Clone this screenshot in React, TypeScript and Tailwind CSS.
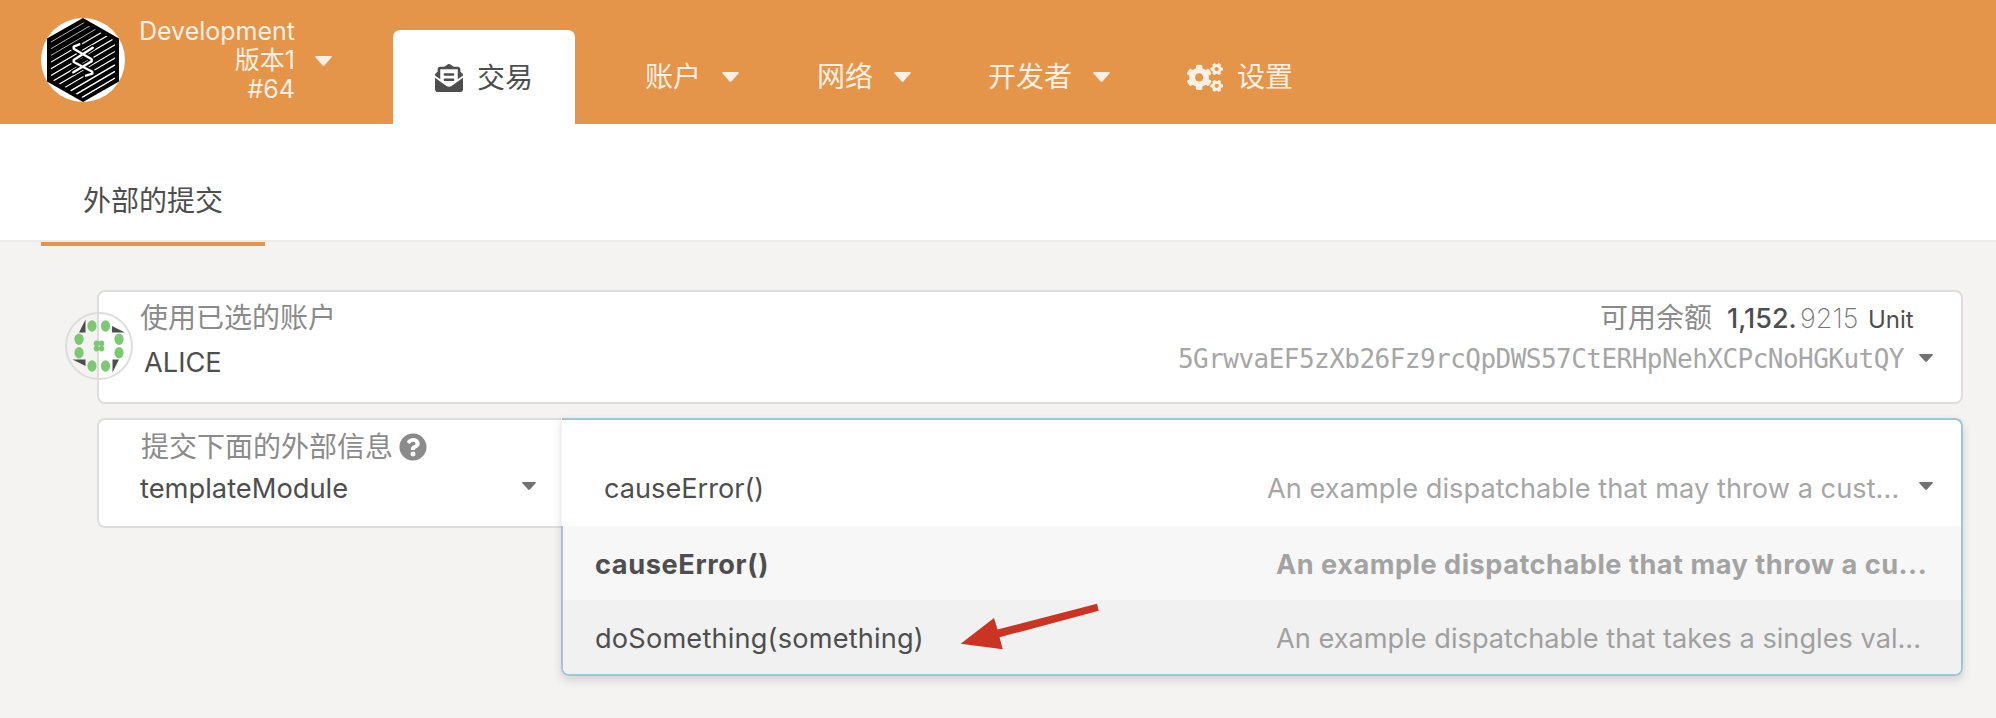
import { FaCogs, FaEnvelopeOpenText, FaQuestionCircle } from "react-icons/fa";

function Caret({ className }: { className: string }) {
  return (
    <svg viewBox="0 0 16 10" preserveAspectRatio="none" className={className} fill="currentColor">
      <path d="M1 0H15Q16.4 0.4 15.5 1.6L9 9.3Q8 10.4 7 9.3L0.5 1.6Q-0.4 0.4 1 0Z" />
    </svg>
  );
}

const stripes = [-3, -2, -1, 0, 1, 2, 3, 4, 5, 6, 7, 8, 9, 10, 11, 12];
const helix =
  "M38.3 26.3L32.7 28.7V30.7L50.7 41.3V43.3L32.3 54.3M51.7 29.7L32.7 42V44L51.3 53.7V55.7L45 57.7";

function Logo() {
  return (
    <svg viewBox="0 0 84 84" className="h-[84px] w-[84px] shrink-0">
      <defs>
        <clipPath id="hex-inner">
          <path d="M42 4L74 23V61L42 80L10 61V23Z" />
        </clipPath>
      </defs>
      <circle cx="42" cy="42" r="42" fill="#fff" />
      <path d="M42 0L78 20.5V63.5L42 84L6 63.5V20.5Z" fill="#000" />
      <g clipPath="url(#hex-inner)" stroke="#fff">
        {stripes.map((i) => (
          <line key={i} x1="10" x2="74" y1={24 + i * 6.7} y2={-13.5 + i * 6.7} strokeWidth={i < 3 ? 0.7 : i > 8 ? 1.5 : 1.2} />
        ))}
      </g>
      <g fill="none" strokeLinecap="round" strokeLinejoin="round">
        <path d={helix} stroke="#000" strokeWidth="5.5" />
        <path d={helix} stroke="#fff" strokeWidth="2.4" />
      </g>
    </svg>
  );
}

const dots = [
  [26, 14], [39.5, 14], [13, 27.3], [13, 40.7], [53, 27.3], [53, 40.7], [26, 54], [39.5, 54],
];
const centreDots = [
  [30.5, 31.4], [35.5, 31.4], [30.5, 36.6], [35.5, 36.6],
];

function Identicon() {
  return (
    <svg viewBox="0 0 68 68" className="absolute top-[20px] left-[-34px] h-[68px] w-[68px]">
      <circle cx="34" cy="34" r="33" fill="none" stroke="#ddd" strokeWidth="2" />
      <path d="M20.5 7.5V20.5H14ZM47 14L60 20.5H47ZM7.5 47.5H20.5V54ZM47.5 47.5H54L47.5 60.5Z" fill="#4e4e4e" />
      <g fill="#7dc872" transform="translate(1 0)">
        {dots.map(([x, y]) => (
          <ellipse key={`${x}-${y}`} cx={x} cy={y} rx="4.6" ry="5.7" />
        ))}
        {centreDots.map(([x, y]) => (
          <circle key={`${x}-${y}`} cx={x} cy={y} r="2.8" />
        ))}
      </g>
    </svg>
  );
}

function NavItem({ label, className }: { label: string; className: string }) {
  return (
    <div className={`flex items-center ${className}`}>
      <span>{label}</span>
      <Caret className="ml-[21px] h-[10px] w-[17px]" />
    </div>
  );
}

export default function App() {
  return (
    <div className="h-[718px] w-[1996px] overflow-hidden bg-[#f4f3f1] font-['Inter','Noto_Sans_CJK_SC',sans-serif] text-[28px] leading-[36px] text-[#4e4e4e]">
      <header className="flex h-[124px] bg-[#e49549] pl-[41px] text-[#fcefe3]">
        <div className="flex w-[352px] items-start pt-[18px]">
          <Logo />
          <div className="-mt-px w-[170px] text-right text-[25px] leading-[29px]">
            <div>Development</div>
            <div>版本1</div>
            <div>#64</div>
          </div>
          <Caret className="mt-[38px] ml-[20px] h-[10px] w-[17px]" />
        </div>
        <div className="mt-[30px] flex w-[182px] items-center rounded-t-[7px] bg-white pt-[2px] pl-[42px] text-[#4e4e4e]">
          <FaEnvelopeOpenText className="h-[28px] w-[28px]" />
          <span className="ml-[14px]">交易</span>
        </div>
        <nav className="mt-[30px] flex items-center">
          <NavItem label="账户" className="ml-[70px] w-[172px]" />
          <NavItem label="网络" className="w-[171px]" />
          <NavItem label="开发者" className="w-[199px]" />
          <FaCogs className="h-[29px] w-[36px]" />
          <span className="ml-[14px]">设置</span>
        </nav>
      </header>

      <div className="h-[118px] border-b-2 border-[#ebebea] bg-white pl-[41px]">
        <div className="flex h-[122px] w-[224px] items-center justify-center border-b-4 border-[#e49549] pt-[36px]">外部的提交</div>
      </div>

      <main className="pt-[48px] pl-[97px]">
        <section className="relative flex h-[114px] w-[1866px] justify-between rounded-[8px] border-2 border-[#ddd] bg-white">
          <Identicon />
          <div className="pt-[8px] pl-[41px]">
            <div className="text-[#8b8b8b]">使用已选的账户</div>
            <div className="mt-[9px] ml-[4px] text-[27.2px]">ALICE</div>
          </div>
          <div className="flex pt-[8px]">
            <div className="w-[726px]">
              <div className="flex items-baseline pl-[422px] whitespace-nowrap">
                <span className="w-[127px] shrink-0 text-[#8b8b8b]">可用余额</span>
                <span className="w-[73px] shrink-0 text-[27px] font-medium">1,152.</span>
                <span className="w-[68px] shrink-0 text-[27px] font-extralight text-[#777]">9215</span>
                <span className="shrink-0 text-[24px]">Unit</span>
              </div>
              <div className="mt-[3px] font-['DejaVu_Sans_Mono',monospace] text-[26px] tracking-[-0.53px] whitespace-nowrap text-[#a6a6a6]">5GrwvaEF5zXb26Fz9rcQpDWS57CtERHpNehXCPcNoHGKutQY</div>
            </div>
            <Caret className="mt-[54px] mr-[28px] ml-[15px] h-[8px] w-[14px] text-[#727272]" />
          </div>
        </section>

        <section className="mt-[14px] flex w-[1866px] items-start">
          <div className="flex h-[110px] w-[464px] rounded-l-[8px] border-2 border-r-0 border-[#ddd] bg-white">
            <div className="w-[383px] pt-[9px] pl-[42px]">
              <div className="flex items-center text-[#8b8b8b]">
                提交下面的外部信息
                <FaQuestionCircle className="mb-px ml-[6px] h-[28px] w-[28px]" />
              </div>
              <div className="mt-[6px] -ml-px text-[27.3px]">templateModule</div>
            </div>
            <Caret className="mt-[62px] ml-[40px] h-[8px] w-[14px] text-[#727272]" />
          </div>

          <div className="w-[1402px] rounded-r-[8px] rounded-bl-[8px] text-[27.15px] whitespace-nowrap shadow-[0_4px_8px_rgba(34,36,38,0.16)]">
            <div className="ml-px flex h-[108px] rounded-tr-[8px] border-t-2 border-r-2 border-[#9fc6d8] bg-white pt-[51px] pl-[42px]">
              <span className="w-[663px]">causeError()</span>
              <span className="w-[652px] tracking-[0.06px] text-[#a6a6a6]">An example dispatchable that may throw a cust...</span>
              <Caret className="mt-[11px] h-[8px] w-[14px] text-[#727272]" />
            </div>
            <div className="overflow-hidden rounded-b-[8px] border-2 border-t-0 border-[#9fc6d8]">
              <div className="flex h-[74px] bg-[#f7f7f7] pt-[21px] pl-[32px] font-bold">
                <span className="w-[681px] tracking-[0.62px]">causeError()</span>
                <span className="tracking-[0.51px] text-[#a3a3a3]">An example dispatchable that may throw a cu...</span>
              </div>
              <div className="relative flex h-[74px] bg-[#f1f1f1] pt-[21px] pl-[32px]">
                <span className="w-[681px] tracking-[0.2px]">doSomething(something)</span>
                <span className="tracking-[0.02px] text-[#a0a0a0]">An example dispatchable that takes a singles val...</span>
                <svg viewBox="960 603 140 48" className="absolute top-[3px] left-[397px] h-[48px] w-[140px]">
                  <path d="M960.7 643.7L994 618L997.5 629.5L1097 603.7L1098.7 610.7L999.5 637.3L1002.7 649.3Z" fill="#cb3422" />
                </svg>
              </div>
            </div>
          </div>
        </section>
      </main>
    </div>
  );
}
